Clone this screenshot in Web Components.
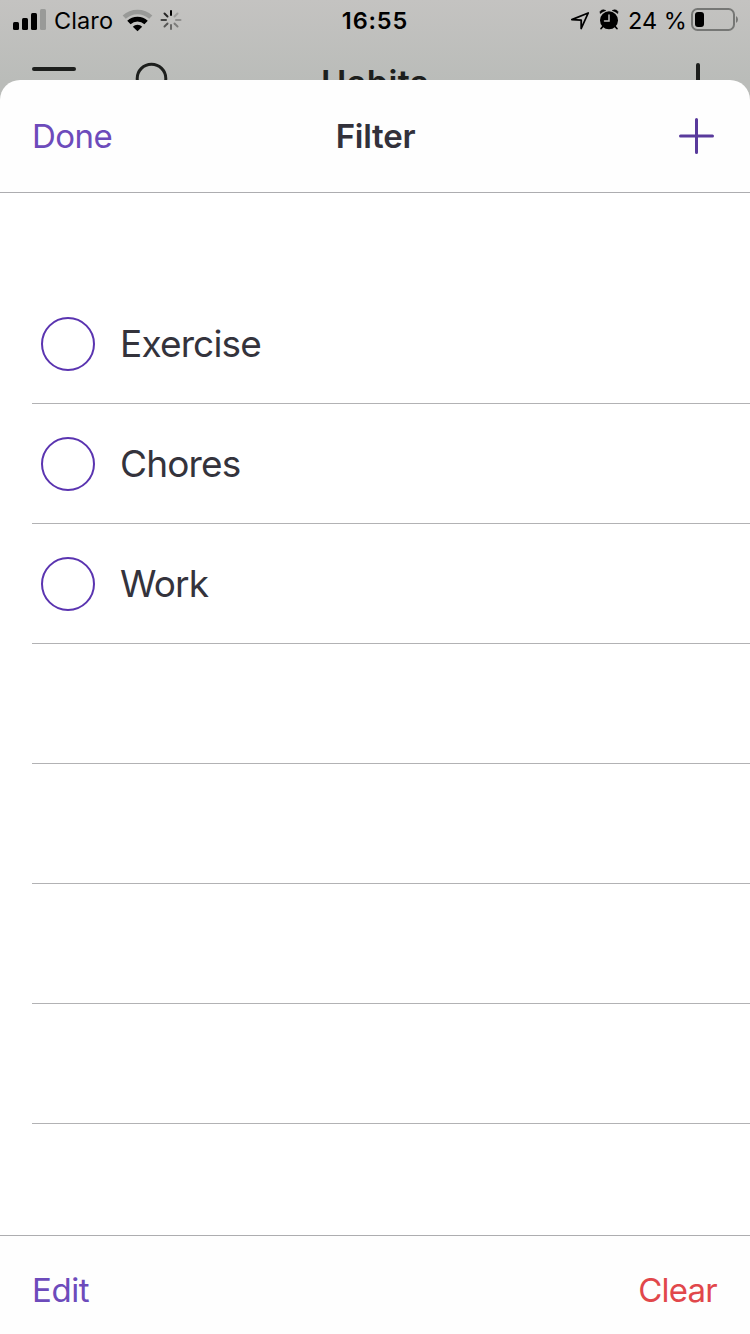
<!DOCTYPE html>
<html lang="en">
<head>
<meta charset="utf-8">
<title>Filter</title>
<style>
html,body{margin:0;height:1334px;overflow:hidden;background:#fff;font-family:Inter,"Liberation Sans",sans-serif}
</style>
</head>
<body>
<filter-screen></filter-screen>
<script>
function define(name, html) {
  const template = document.createElement('template');
  template.innerHTML = html;
  customElements.define(name, class extends HTMLElement {
    constructor() {
      super();
      this.attachShadow({mode: 'open'}).appendChild(template.content.cloneNode(true));
    }
  });
}

define('status-bar', `<style>
:host{display:grid;grid-template-columns:1fr auto 1fr;height:41px;align-items:center;color:#000;font-size:23.5px;line-height:41px}
.l,.r{display:flex;align-items:center;height:41px}
.l{padding-left:13px}
.r{justify-content:flex-end;padding-right:11px}
.time{font-weight:600;letter-spacing:.85px}
.carrier{margin-left:8px;width:68px;letter-spacing:.1px}
.pct{margin-left:9px;width:62px;white-space:nowrap;letter-spacing:0}
svg{display:block;flex:none}
</style>
<div class="l">
<svg width="33" height="41"><rect x="0" y="22" width="6" height="8" rx="1.5"/><rect x="9" y="18" width="6" height="12" rx="1.5"/><rect x="18" y="13" width="6" height="17" rx="1.5"/><rect x="27" y="9" width="6" height="21" rx="1.5" fill="#999a98"/></svg>
<span class="carrier">Claro</span>
<svg width="62" height="41"><g fill="none"><path d="M2.200 17.200A19.300 19.300 0 0 1 28.800 17.200" stroke="#999a98" stroke-width="4.500"/><path d="M6.900 22.600A12.400 12.400 0 0 1 24.100 22.600" stroke="#000" stroke-width="4.800"/></g><path d="M10.800 26.800a6.700 6.700 0 0 1 9.400 0l-4.700 4.400z"/>
<g stroke="#000" stroke-width="2" stroke-linecap="round"><path d="M49 15v-4"/><path d="M52.5 16.5l3-3" opacity=".18"/><path d="M54 20h4.500" opacity=".25"/><path d="M52.5 23.5l3 3" opacity=".35"/><path d="M49 25v4" opacity=".45"/><path d="M45.5 23.5l-3 3" opacity=".55"/><path d="M44 20h-4.500" opacity=".65"/><path d="M45.5 16.5l-3-3" opacity=".8"/></g></svg>
</div>
<span class="time">16:55</span>
<div class="r">
<svg width="48" height="41"><path d="M.800 19.600L17.200 13 10.200 28.500V20.200z" fill="none" stroke="#000" stroke-width="1.800" stroke-linejoin="round"/>
<circle cx="38" cy="20.300" r="9"/><path d="M29.300 13.500q-1-2 .8-3.100 2-1.200 4.700.1-3 .8-5.500 3zM46.700 13.500q1-2-.8-3.100-2-1.200-4.700.1 3 .8 5.500 3z" stroke="#000" stroke-width=".6"/><path d="M32.300 26l-2.200 2.500M43.700 26l2.200 2.500" stroke="#000" stroke-width="1.800" stroke-linecap="round"/><path d="M38 15v6h-4.500" fill="none" stroke="#bfbfbd" stroke-width="1.500" stroke-linecap="round"/></svg>
<span class="pct">24 %</span>
<svg width="49" height="41"><rect x="2" y="9" width="42" height="21" rx="5.500" fill="none" stroke="#767775" stroke-width="2"/><rect x="5" y="12" width="9" height="15" rx="3"/><path d="M46 16q2 1.300 2 3.500t-2 3.500z" fill="#767775"/></svg>
</div>`);

define('page-behind', `<style>
:host{display:block;height:100px;background:linear-gradient(#c4c3c1,#babcb9 80px);color:#1d1f1d}
.bar{display:grid;grid-template-columns:1fr auto 1fr;height:59px}
svg{display:block}
.title{font-size:34px;font-weight:600;line-height:36px;padding-top:24px;letter-spacing:.4px}
.right{justify-self:end}
</style>
<status-bar></status-bar>
<div class="bar">
<svg width="200" height="39"><rect x="32" y="26" width="44" height="4" rx="2" fill="currentColor"/><circle cx="151.500" cy="37.500" r="14.300" fill="none" stroke="currentColor" stroke-width="3"/></svg>
<span class="title">Habits</span>
<svg class="right" width="60" height="39"><rect x="6" y="22" width="4" height="36" rx="2" fill="currentColor"/></svg>
</div>`);

define('sheet-header', `<style>
:host{display:grid;grid-template-columns:1fr auto 1fr;align-items:center;height:112px;padding:0 35px 0 32px;border-bottom:1px solid #adadb0;box-sizing:content-box;font-size:33px;line-height:40px}
::slotted([slot=start]){color:#6d4bbb;letter-spacing:-.5px}
.title{font-weight:600;color:#32313b;letter-spacing:-.25px;padding-left:4px}
svg{display:block;justify-self:end}
</style>
<slot name="start"></slot><span class="title"><slot></slot></span>
<svg width="36" height="36"><path d="M1.500 18h32M17.500 1.500v33" stroke="#593a9c" stroke-width="3" stroke-linecap="round"/></svg>`);

define('tag-row', `<style>
:host{display:flex;align-items:center;box-sizing:border-box;height:120px;margin-left:32px;padding-left:9px;border-bottom:1px solid #b2b2b4;font-size:37px;line-height:44px;color:#34333c;letter-spacing:-.85px}
.ring{box-sizing:border-box;width:54px;height:54px;border:2px solid #5a34b0;border-radius:50%;margin-right:25px}
:host([empty]) .ring{display:none}
</style><div class="ring"></div><span><slot></slot></span>`);

define('sheet-footer', `<style>
:host{display:flex;justify-content:space-between;box-sizing:border-box;height:99px;padding:34px 33px 0 32px;border-top:1px solid #adadb0;font-size:33px;line-height:40px;color:#6d4bbb;letter-spacing:-.4px}
::slotted([slot=end]){color:#e1474b;letter-spacing:-.75px}
</style><slot></slot><slot name="end"></slot>`);

define('filter-screen', `<style>
:host{display:flex;flex-direction:column;height:1334px;width:750px;overflow:hidden}
page-behind{flex:none}
.sheet{display:flex;flex-direction:column;flex:none;height:1254px;margin-top:-20px;background:#fefefe;border-radius:20px 20px 0 0;overflow:hidden;position:relative}
.list{flex:1;padding-top:91px;background:#fff}
</style>
<page-behind></page-behind>
<div class="sheet">
<sheet-header><span slot="start">Done</span>Filter</sheet-header>
<div class="list">
<tag-row>Exercise</tag-row><tag-row>Chores</tag-row><tag-row>Work</tag-row>
<tag-row empty></tag-row><tag-row empty></tag-row><tag-row empty></tag-row><tag-row empty></tag-row>
</div>
<sheet-footer><span>Edit</span><span slot="end">Clear</span></sheet-footer>
</div>`);
</script>
</body>
</html>
